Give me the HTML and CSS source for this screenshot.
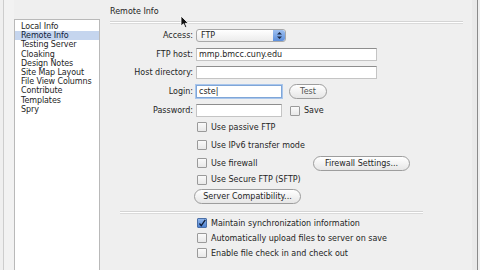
FILE: index.html
```html
<!DOCTYPE html>
<html lang="en">
<head>
    <meta charset="UTF-8">
    <meta name="viewport" content="width=device-width, initial-scale=1.0">
    <title>Site Definition - Remote Info</title>
    <link rel="stylesheet" href="styles.css">
</head>
<body>
    <div class="window">
        <div class="edge-left"></div>

        <ul class="categories">
            <li>Local Info</li>
            <li class="selected">Remote Info</li>
            <li>Testing Server</li>
            <li>Cloaking</li>
            <li>Design Notes</li>
            <li>Site Map Layout</li>
            <li>File View Columns</li>
            <li>Contribute</li>
            <li>Templates</li>
            <li>Spry</li>
        </ul>

        <div class="panel">
            <div class="panel-title">Remote Info</div>
            <div class="rule"></div>

            <div class="row first">
                <span class="label">Access:</span>
                <div class="select">
                    <span>FTP</span>
                    <span class="stepper">
                        <svg width="7" height="9" viewBox="0 0 7 9">
                            <path d="M1 3.5 L3.5 1 L6 3.5 Z M1 5.5 L3.5 8 L6 5.5 Z" fill="#1d2a44"/>
                        </svg>
                    </span>
                </div>
            </div>
            <div class="row">
                <span class="label">FTP host:</span>
                <input class="field wide" type="text" value="mmp.bmcc.cuny.edu">
            </div>
            <div class="row">
                <span class="label">Host directory:</span>
                <input class="field wide" type="text" value="">
            </div>
            <div class="row">
                <span class="label">Login:</span>
                <input class="field short focused" type="text" value="cste|">
                <button class="pill test-btn">Test</button>
            </div>
            <div class="row">
                <span class="label">Password:</span>
                <input class="field short" type="password" value="">
                <span class="check save-check"></span>
                <span class="check-text">Save</span>
            </div>

            <div class="row opt first-opt">
                <span class="check"></span>
                <span class="check-text">Use passive FTP</span>
            </div>
            <div class="row opt">
                <span class="check"></span>
                <span class="check-text">Use IPv6 transfer mode</span>
            </div>
            <div class="row opt firewall-row">
                <span class="check-group">
                    <span class="check"></span>
                    <span class="check-text">Use firewall</span>
                </span>
                <button class="pill firewall-btn">Firewall Settings...</button>
            </div>
            <div class="row opt short-row">
                <span class="check"></span>
                <span class="check-text">Use Secure FTP (SFTP)</span>
            </div>
            <div class="row compat-row">
                <button class="pill compat-btn">Server Compatibility...</button>
            </div>

            <div class="rule lower"></div>

            <div class="row sync">
                <span class="check checked">
                    <svg width="11" height="11" viewBox="0 0 11 11">
                        <path d="M2 5.5 L4.5 8.5 L10 0.5" fill="none" stroke="#0f1d3a" stroke-width="1.8"/>
                    </svg>
                </span>
                <span class="check-text">Maintain synchronization information</span>
            </div>
            <div class="row sync">
                <span class="check"></span>
                <span class="check-text">Automatically upload files to server on save</span>
            </div>
            <div class="row sync">
                <span class="check"></span>
                <span class="check-text">Enable file check in and check out</span>
            </div>
        </div>

        <div class="edge-right"></div>
    </div>

    <svg class="cursor" width="9" height="14" viewBox="0 0 9 14">
        <path d="M1 1 L1 11 L3.5 8.8 L5.2 12.6 L6.8 11.9 L5.2 8.3 L8.3 8.3 Z" fill="#111" stroke="#fff" stroke-width="0.8"/>
    </svg>
</body>
</html>
```

FILE: styles.css
```css
body {
    margin: 0;
    width: 480px;
    height: 270px;
    overflow: hidden;
    background-color: #efefef;
    font-family: "DejaVu Sans", sans-serif;
    font-size: 8px;
    color: #1e1e1e;
}
.window {
    display: flex;
    height: 270px;
    background-color: #efefef;
}
.edge-left {
    width: 10px;
    margin-left: 3px;
    border-left: 1px solid #cdcdcd;
    background-color: #f2f2f2;
}
.categories {
    width: 84px;
    margin: 19px 0 0 0;
    padding: 2px 0 0 0;
    list-style: none;
    background-color: white;
    border: 1px solid #b9b9b9;
    border-bottom: none;
}
.categories li {
    height: 9.2px;
    line-height: 9.2px;
    padding-left: 6px;
    white-space: nowrap;
    letter-spacing: -0.1px;
}
.categories li.selected {
    background-color: #c5d5ee;
    color: #0d1b3a;
}
.panel {
    flex: 1;
    padding: 0 9px 0 10px;
}
.panel-title {
    margin-top: 7px;
    line-height: 10px;
    height: 10px;
}
.rule {
    margin-top: 4px;
    height: 1px;
    border-top: 1px solid #d4d4d4;
    border-bottom: 1px solid #dadada;
    background-color: white;
}
.rule.lower {
    margin: 6px 40px 2px 10px;
}
.row {
    display: flex;
    align-items: center;
    height: 18.8px;
}
.row.first {
    margin-top: 2px;
}
.label {
    width: 83px;
    text-align: right;
    white-space: nowrap;
}
.select {
    display: flex;
    align-items: center;
    justify-content: space-between;
    margin-left: 3px;
    width: 84px;
    height: 11px;
    padding-left: 4px;
    border: 1px solid #a9a9a9;
    border-radius: 3px;
    background: linear-gradient(#ffffff, #ececec);
}
.stepper {
    display: flex;
    align-items: center;
    justify-content: center;
    width: 12px;
    height: 11px;
    border-radius: 0 3px 3px 0;
    background: linear-gradient(#9ec0f0, #5d8fdc);
}
.field {
    margin-left: 3px;
    height: 13px;
    padding: 0 2px;
    box-sizing: border-box;
    border: 1px solid #c4c4c4;
    border-top-color: #8e8e8e;
    background-color: white;
    font-family: "DejaVu Sans", sans-serif;
    font-size: 8px;
    color: #1e1e1e;
    outline: none;
}
.field.wide {
    width: 181px;
}
.field.short {
    width: 86px;
}
.field.focused {
    border: 1px solid #7fa6d8;
    box-shadow: 0 0 0 1px #a9c6ec;
}
.pill {
    height: 15px;
    padding: 0 6px;
    border: 1px solid #9d9d9d;
    border-radius: 8px;
    background: linear-gradient(#ffffff, #e6e6e6);
    font-family: "DejaVu Sans", sans-serif;
    font-size: 8px;
    color: #1e1e1e;
    white-space: nowrap;
}
.test-btn {
    margin-left: 7px;
    width: 38px;
    color: #555;
}
.check {
    display: inline-flex;
    align-items: center;
    justify-content: center;
    width: 8px;
    height: 8px;
    border: 1px solid #9a9a9a;
    border-radius: 1px;
    background: linear-gradient(#fafafa, #e8e8e8);
    flex-shrink: 0;
}
.check.checked {
    background: linear-gradient(#8fb5ea, #4f83d2);
    border-color: #4a6fa8;
}
.check-text {
    margin-left: 4px;
    white-space: nowrap;
}
.save-check {
    margin-left: 8px;
}
.opt {
    padding-left: 87px;
    height: 18.3px;
}
.first-opt {
    margin-top: -2px;
}
.firewall-row {
    height: 17px;
}
.check-group {
    display: flex;
    align-items: center;
    width: 116px;
}
.firewall-btn {
    width: 97px;
}
.short-row {
    height: 16px;
}
.compat-row {
    height: 17px;
    padding-left: 84px;
}
.compat-btn {
    width: 107px;
}
.sync {
    height: 15px;
    padding-left: 87px;
}
.edge-right {
    width: 5px;
    margin-right: 2px;
    background-color: #e9e9e9;
    border-right: 1px solid #8a8a8a;
}
.cursor {
    position: absolute;
    left: 180px;
    top: 15px;
}
```
